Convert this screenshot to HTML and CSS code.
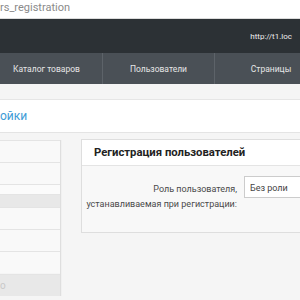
FILE: index.html
```html
<!DOCTYPE html>
<html lang="ru">
  <head>
    <meta charset="UTF-8" />
    <title>Настройки</title>
    <link rel="stylesheet" href="styles.css">
  </head>
  <body>
    <div class="address">rs_registration</div>
    <div class="topbar">
      <span class="site-link">http://t1.loc</span>
    </div>
    <div class="nav">
      <div class="nav-item nav-first">Каталог товаров</div>
      <div class="nav-item">Пользователи</div>
      <div class="nav-item nav-last">Страницы</div>
    </div>
    <div class="subbar"></div>
    <div class="page-title">ойки</div>

    <div class="content">
      <div class="sidebar">
        <div class="side-item"></div>
        <div class="side-item"></div>
        <div class="side-gap"></div>
        <div class="side-item side-head"></div>
        <div class="side-item"></div>
        <div class="side-item"></div>
        <div class="side-item"></div>
        <div class="side-item side-head side-btn">о</div>
      </div>

      <div class="panel">
        <div class="panel-header">Регистрация пользователей</div>
        <div class="panel-body">
          <div class="form-row">
            <label class="form-label">Роль пользователя, устанавливаемая при регистрации:</label>
            <div class="select">Без роли</div>
          </div>
        </div>
      </div>
    </div>
  </body>
</html>
```

FILE: styles.css
```css
:root {
  --dark: #2c3135;
  --nav: #4a5056;
  --nav-line: #5d6369;
  --page: #f5f5f5;
  --border: #dedede;
  --blue: #3d9bd6;
}

html,
body {
  margin: 0;
  padding: 0;
  width: 300px;
  height: 300px;
  overflow: hidden;
  background: var(--page);
  font-family: Roboto, "Liberation Sans", sans-serif;
}

.address {
  height: 19px;
  line-height: 16px;
  background: #fff;
  border-bottom: 1px solid #dcdcdc;
  color: #8a8a8a;
  font-size: 11px;
  white-space: nowrap;
  box-sizing: border-box;
}

.topbar {
  height: 34px;
  background: var(--dark);
  display: flex;
  align-items: center;
  justify-content: flex-end;
  padding-right: 8px;
  color: #eee;
  font-size: 8px;
}

.nav {
  height: 31px;
  background: var(--nav);
  display: grid;
  grid-template-columns: 103px 112px 1fr;
}

.nav-item {
  display: flex;
  align-items: center;
  justify-content: center;
  border-right: 1px solid var(--nav-line);
  color: #e6e6e6;
  font-size: 8.5px;
  white-space: nowrap;
}

.nav-first {
  padding-right: 9px;
}

.nav-last {
  border-right: none;
  padding-left: 27px;
}

.subbar {
  height: 15px;
  background: var(--page);
  border-bottom: 1px solid #e6e6e6;
}

.page-title {
  height: 32px;
  line-height: 32px;
  background: #fff;
  border-bottom: 1px solid #e4e4e4;
  color: var(--blue);
  font-size: 12px;
}

.content {
  display: flex;
  align-items: flex-start;
  gap: 20px;
  padding-top: 7px;
}

.sidebar {
  width: 60px;
  flex: none;
  border-right: 1px solid var(--border);
  box-shadow: 1px 0 0 #f0f0f0;
}

.side-item {
  height: 21px;
  background: #f9f9f9;
  border-top: 1px solid #e4e4e4;
}

.side-gap {
  height: 9px;
  background: #fbfbfb;
  border-top: 1px solid #e4e4e4;
}

.side-head {
  height: 12px;
  background: #e8e8e8;
}

.side-btn {
  height: 21px;
  line-height: 21px;
  font-size: 10px;
  color: #c8c8c8;
  margin-top: 1px;
}

.panel {
  flex: 1;
  margin-top: -1px;
  border: 1px solid var(--border);
  border-right: none;
  background: #f8f8f8;
}

.panel-header {
  height: 25px;
  line-height: 25px;
  padding-left: 12px;
  background: #fff;
  border-bottom: 1px solid #e4e4e4;
  color: #222;
  font-size: 11.3px;
  font-weight: 700;
  white-space: nowrap;
}

.panel-body {
  height: 66px;
  padding-top: 10px;
  box-sizing: border-box;
}

.form-row {
  display: flex;
  align-items: flex-start;
  gap: 7px;
}

.form-label {
  width: 155px;
  flex: none;
  padding-top: 6px;
  text-align: right;
  color: #4a4a4a;
  font-size: 9px;
  line-height: 15px;
}

.select {
  flex: 1;
  height: 22px;
  line-height: 22px;
  padding-left: 5px;
  background: #fff;
  border: 1px solid #ccc;
  border-right: none;
  box-sizing: border-box;
  color: #444;
  font-size: 9px;
  white-space: nowrap;
}
```
